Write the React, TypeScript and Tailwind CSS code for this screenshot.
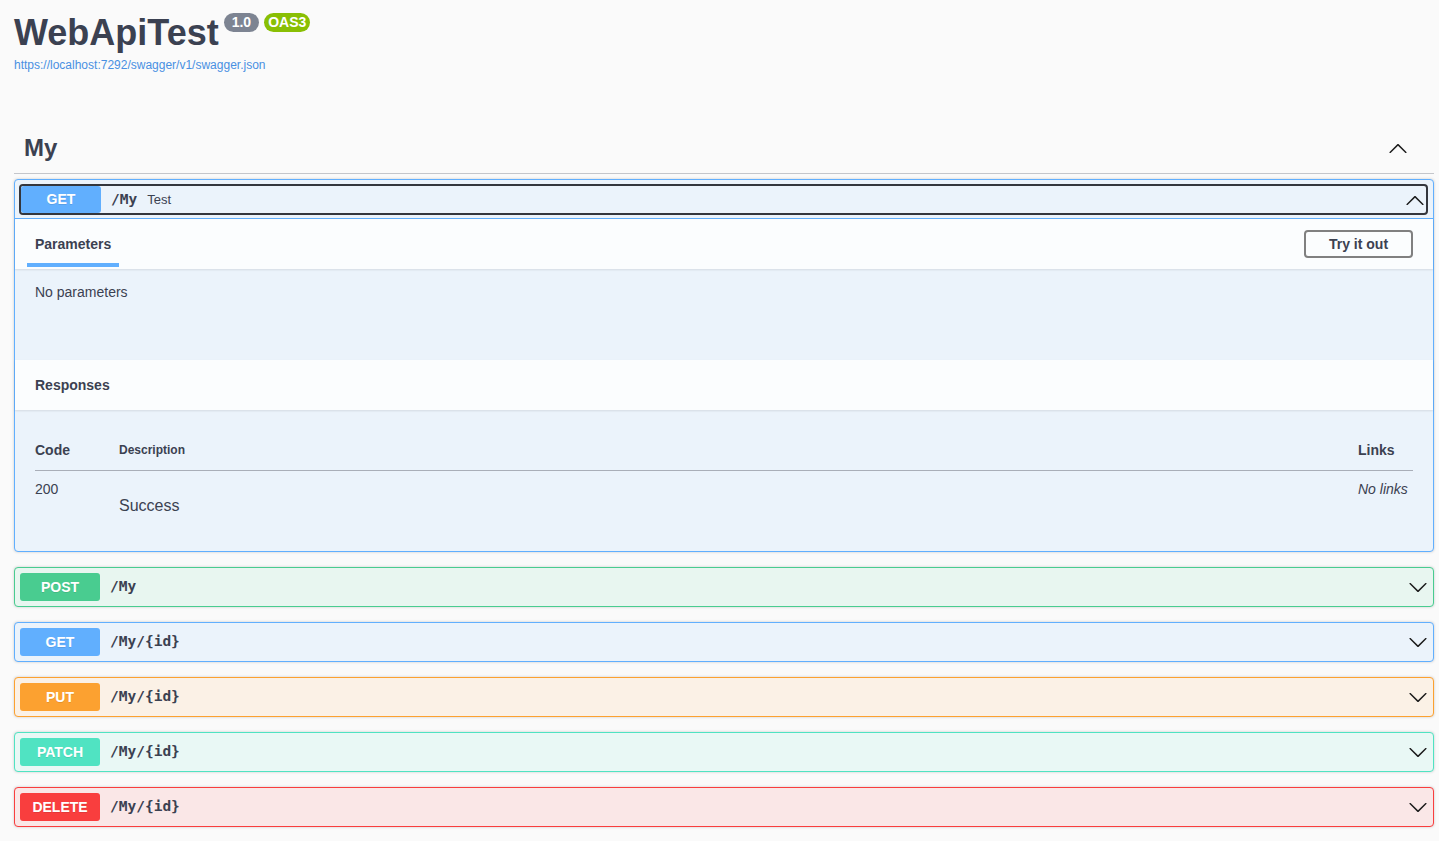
import React from 'react';

type Op = {
  method: string;
  path: string;
  badge: string;
  border: string;
  bg: string;
};

const ops: Op[] = [
  { method: 'POST', path: '/My', badge: 'bg-[#49cc90]', border: 'border-[#49cc90]', bg: 'bg-[#e8f6f0]' },
  { method: 'GET', path: '/My/{id}', badge: 'bg-[#61affe]', border: 'border-[#61affe]', bg: 'bg-[#ebf3fb]' },
  { method: 'PUT', path: '/My/{id}', badge: 'bg-[#fca130]', border: 'border-[#fca130]', bg: 'bg-[#fbf1e6]' },
  { method: 'PATCH', path: '/My/{id}', badge: 'bg-[#50e3c2]', border: 'border-[#50e3c2]', bg: 'bg-[#e9f8f5]' },
  { method: 'DELETE', path: '/My/{id}', badge: 'bg-[#f93e3e]', border: 'border-[#f93e3e]', bg: 'bg-[#fae7e7]' },
];

const ArrowDown = () => (
  <svg width="20" height="20" viewBox="0 0 20 20" className="shrink-0 fill-[#1b1b1b]">
    <path d="M17.418 6.109c.272-.268.709-.268.979 0s.271.701 0 .969l-7.908 7.83c-.27.268-.707.268-.979 0l-7.908-7.83c-.27-.268-.27-.701 0-.969.271-.268.709-.268.979 0L10 13.25l7.418-7.141z" />
  </svg>
);

const ArrowUp = () => (
  <svg width="20" height="20" viewBox="0 0 20 20" className="shrink-0 fill-[#1b1b1b]">
    <path d="M17.418 14.908c.272.268.709.268.979 0s.271-.701 0-.969l-7.908-7.83c-.27-.268-.707-.268-.979 0l-7.908 7.83c-.27.268-.27.701 0 .969.271.268.709.268.979 0L10 7.748l7.418 7.16z" />
  </svg>
);

const mono = { fontFamily: '"DejaVu Sans Mono", monospace' };

const Badge = ({ method, color, h = 'h-[28px]' }: { method: string; color: string; h?: string }) => (
  <span
    className={`${color} ${h} min-w-[80px] flex items-center justify-center rounded-[3px] text-white text-[14px] font-bold [text-shadow:0_1px_0_rgba(0,0,0,0.1)]`}
  >
    {method}
  </span>
);

const CollapsedOp = ({ op }: { op: Op }) => (
  <div className={`border ${op.border} ${op.bg} rounded-[4px] mb-[15px] shadow-[0_0_3px_rgba(0,0,0,0.19)]`}>
    <div className="flex items-center p-[5px]">
      <Badge method={op.method} color={op.badge} />
      <span className="ml-[10px] text-[14.5px] font-bold text-[#3b4151]" style={mono}>
        {op.path}
      </span>
      <div className="flex-1" />
      <ArrowDown />
    </div>
  </div>
);

const SectionHeader = ({ children }: { children: React.ReactNode }) => (
  <div className="bg-[#fbfdfe] shadow-[0_1px_2px_rgba(0,0,0,0.1)] h-[50px] flex items-center justify-between px-[20px] relative">
    {children}
  </div>
);

export default function App() {
  return (
    <div
      className="min-h-screen bg-[#fafafa] text-[#3b4151] pl-[14px] pr-[5px] pb-[20px]"
      style={{ fontFamily: '"Liberation Sans", Arial, sans-serif' }}
    >
      {/* info */}
      <div className="pt-[15px]">
        <div className="flex items-start">
          <h1 className="text-[36px] leading-[36px] font-bold">WebApiTest</h1>
          <span className="ml-[5px] -mt-[2px] bg-[#7d8492] text-white text-[14px] leading-[15px] font-bold px-[8px] py-[2px] rounded-full">
            1.0
          </span>
          <span className="ml-[5px] -mt-[2px] bg-[#89bf04] text-white text-[14px] leading-[15px] font-bold px-[4px] py-[2px] rounded-full">
            OAS3
          </span>
        </div>
        <a className="block mt-[7px] text-[12px] leading-[15px] text-[#4990e2]">
          https://localhost:7292/swagger/v1/swagger.json
        </a>
      </div>

      {/* tag */}
      <div className="mt-[50px] flex items-center justify-between border-b border-[#c4c6cb] py-[10px] pl-[10px] pr-[26px]">
        <h3 className="text-[24px] leading-[30px] font-bold">My</h3>
        <ArrowUp />
      </div>

      <div className="mt-[5px]">
        {/* expanded GET */}
        <div className="border border-[#61affe] bg-[#ebf3fb] rounded-[4px] mb-[15px] shadow-[0_0_3px_rgba(0,0,0,0.19)]">
          <div className="pl-[4px] pr-[5px] pt-[4px] pb-[3px] border-b border-[#61affe]">
            <div className="flex items-center border-2 border-[#33363d] rounded-[4px] pr-[1px]">
              <Badge method="GET" color="bg-[#61affe]" h="h-[27px]" />
              <span className="ml-[10px] text-[14.5px] font-bold" style={mono}>
                /My
              </span>
              <span className="ml-[10px] text-[13px]">Test</span>
              <div className="flex-1" />
              <ArrowUp />
            </div>
          </div>

          <SectionHeader>
            <div className="relative">
              <h4 className="text-[14px] leading-[16px] font-bold">Parameters</h4>
              <div className="absolute -left-[8px] -right-[8px] top-[27px] h-[4px] bg-[#61affe]" />
            </div>
            <button className="border-2 border-[#808080] rounded-[4px] h-[28px] w-[109px] text-[14px] font-bold bg-transparent">
              Try it out
            </button>
          </SectionHeader>

          <div className="h-[91px] px-[20px] pt-[13px] text-[14px]">No parameters</div>

          <SectionHeader>
            <h4 className="text-[14px] font-bold">Responses</h4>
          </SectionHeader>

          <div className="px-[20px] pt-[31px] pb-[35px]">
            <div className="flex items-center border-b border-[#a9aeb8] pb-[11px]">
              <div className="w-[84px] text-[14px] font-bold leading-[18px]">Code</div>
              <div className="flex-1 text-[12px] font-bold leading-[18px]">Description</div>
              <div className="w-[55px] text-[14px] font-bold leading-[18px]">Links</div>
            </div>
            <div className="flex items-start pt-[9px]">
              <div className="w-[84px] text-[14px] leading-[18px]">200</div>
              <div className="flex-1 pt-[16px] text-[16px] leading-[20px]">Success</div>
              <div className="w-[55px] text-[14px] italic leading-[18px]">No links</div>
            </div>
          </div>
        </div>

        {ops.map((op) => (
          <CollapsedOp key={op.method} op={op} />
        ))}
      </div>
    </div>
  );
}
